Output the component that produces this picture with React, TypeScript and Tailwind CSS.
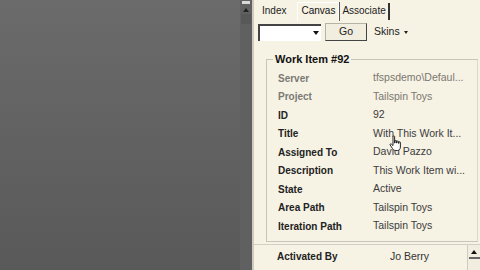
import React from 'react'

const rows: { label: string; value: string; dim?: boolean }[] = [
  { label: 'Server', value: 'tfspsdemo\\Defaul...', dim: true },
  { label: 'Project', value: 'Tailspin Toys', dim: true },
  { label: 'ID', value: '92' },
  { label: 'Title', value: 'With This Work It...' },
  { label: 'Assigned To', value: 'David Pazzo' },
  { label: 'Description', value: 'This Work Item wi...' },
  { label: 'State', value: 'Active' },
  { label: 'Area Path', value: 'Tailspin Toys' },
  { label: 'Iteration Path', value: 'Tailspin Toys' },
]

function HandCursor() {
  return (
    <svg width="14" height="17" viewBox="0 0 14 17" className="absolute left-[389px] top-[135px]">
      <path
        d="M4 1.5c0-.8 1.6-.8 1.6 0V8h.4V6c0-.8 1.6-.8 1.6 0v2h.4V6.6c0-.8 1.6-.8 1.6 0V8.4h.3V7.4c0-.8 1.5-.8 1.5 0V12c0 2-1.2 3.5-3 3.5H6.5C5 15.5 4.2 14.6 3.4 13.4L1.2 10c-.5-.8.5-1.6 1.2-.9L4 10.6z"
        fill="#fff"
        stroke="#111"
        strokeWidth="0.9"
      />
    </svg>
  )
}

export default function App() {
  return (
    <div
      className="relative flex h-[270px] w-[480px] overflow-hidden whitespace-nowrap text-[10.5px] text-[#222]"
      style={{ fontFamily: '"Liberation Sans", Arial, sans-serif' }}
    >
      {/* dark editor area */}
      <div className="h-full w-[240px] bg-gradient-to-b from-[#6b6b6b] to-[#595959]" />

      {/* thin scroll strip */}
      <div className="flex h-full w-[12px] flex-col items-center bg-[#606060]">
        <div className="mt-[1px] h-[3px] w-[8px] bg-[#d8d8d8]" />
        <div className="mt-[4px] h-0 w-0 border-x-[3px] border-b-[4px] border-x-transparent border-b-[#222]" />
        <div className="mt-[2px] h-[10px] w-[10px] bg-[#585858]" />
      </div>

      {/* tool panel */}
      <div className="flex h-full flex-1 flex-col border-l-[2px] border-[#cfcbbf] bg-[#f6f2e4]">
        {/* tabs */}
        <div className="flex h-[20px] items-end pl-[5px] pt-[3px] text-[10px]">
          <div className="px-[3px] pb-[2px] text-[#222]">Index</div>
          <div className="ml-[8px] -mb-[1px] border-x border-t border-[#fff] bg-[#f6f2e4] px-[3px] pb-[3px] text-[#111] shadow-[1px_0_0_#555]">
            Canvas
          </div>
          <div className="ml-[1px] border-r-[2px] border-[#333] px-[2px] pb-[2px] text-[#222]">
            Associate
          </div>
        </div>

        {/* toolbar */}
        <div className="mt-[3px] flex items-center pl-[4px]">
          <div className="flex h-[17px] w-[63px] items-center justify-end border-l-2 border-t-2 border-[#444] bg-white pr-[2px]">
            <div className="h-0 w-0 border-x-[3px] border-t-[4px] border-x-transparent border-t-[#111]" />
          </div>
          <div className="ml-[4px] flex h-[18px] w-[42px] items-center justify-center border border-[#b6b2a6] border-r-[#444] border-b-[#444] bg-[#f1eddf]">
            Go
          </div>
          <div className="ml-[7px] flex items-center gap-[4px]">
            Skins
            <div className="h-0 w-0 border-x-[2.5px] border-t-[3px] border-x-transparent border-t-[#222]" />
          </div>
        </div>

        {/* group box */}
        <div className="relative ml-[12px] mr-[2px] mt-[18px] h-[183px] border border-[#c9c5b8] border-r-[#ddd9cc] pl-[11px] pt-[9px]">
          <div className="absolute left-[6px] top-[-9px] bg-[#f6f2e4] px-[2px] text-[11px] font-bold text-[#111]">
            Work Item #92
          </div>
          <div className="flex flex-col">
            {rows.map((r) => (
              <div key={r.label} className="flex h-[18.5px] items-center">
                <div className={`w-[95px] text-[10px] font-bold ${r.dim ? 'text-[#7a7a74]' : 'text-[#222]'}`}>
                  {r.label}
                </div>
                <div className={r.dim ? 'text-[#7a7870]' : 'text-[#3c3c3c]'}>{r.value}</div>
              </div>
            ))}
          </div>
        </div>

        {/* lower section */}
        <div className="mt-[2px] flex flex-1 border-t border-[#d3cfc2]">
          <div className="flex flex-1 items-start pl-[23px] pt-[4px]">
            <div className="w-[113px] text-[10px] font-bold text-[#222]">Activated By</div>
            <div className="text-[#333]">Jo Berry</div>
          </div>
          <div className="flex w-[13px] flex-col items-center border-l border-[#cfcbbf] bg-[#f1eddf]">
            <div className="mt-[5px] h-0 w-0 border-x-[3px] border-b-[4px] border-x-transparent border-b-[#111]" />
            <div className="mt-[3px] h-[2px] w-[11px] bg-[#666]" />
          </div>
        </div>
      </div>

      <HandCursor />
    </div>
  )
}
